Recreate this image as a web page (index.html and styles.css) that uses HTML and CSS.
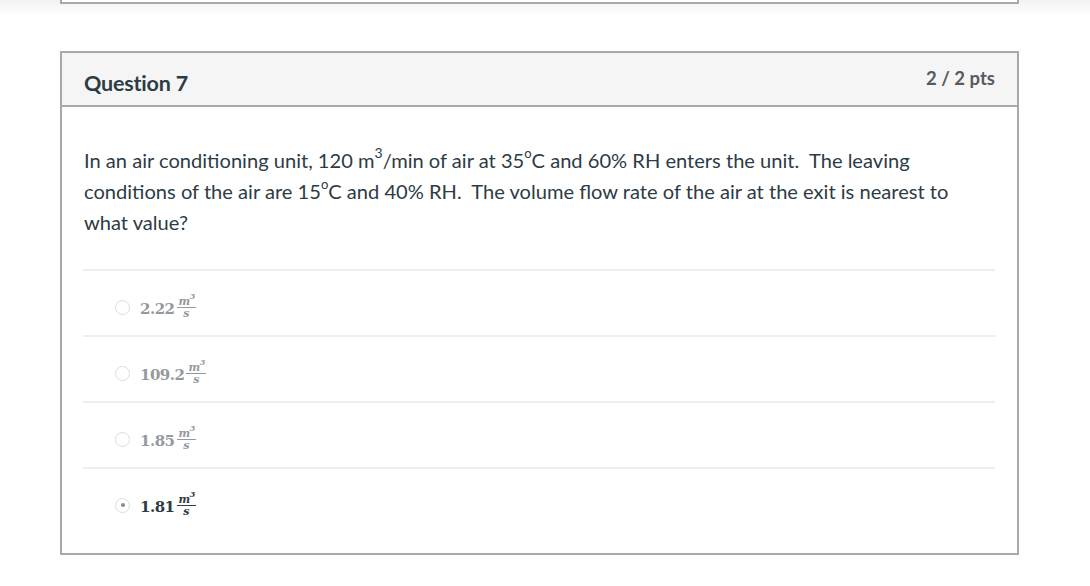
FILE: index.html
```html
<!DOCTYPE html>
<html>
<head>
<meta charset="utf-8">
<link rel="stylesheet" href="styles.css">
</head>
<body>
<div class="page">
  <div class="prev-card"></div>
  <div class="card">
    <div class="card-header">
      <h2 class="q-title">Question 7</h2>
      <span class="q-points">2 / 2 pts</span>
    </div>
    <div class="card-body">
      <p class="q-text">In an air conditioning unit, 120 m<sup>3</sup>/min of air at 35<sup class="deg">o</sup>C and 60% RH enters the unit.&nbsp; The leaving conditions of the air are 15<sup class="deg">o</sup>C and 40% RH.&nbsp; The volume flow rate of the air at the exit is nearest to what value?</p>
      <ul class="answers">
        <li class="answer">
          <span class="radio"></span>
          <span class="math">2.22<span class="frac"><span class="num">m<sup>3</sup></span><span class="den">s</span></span></span>
        </li>
        <li class="answer">
          <span class="radio"></span>
          <span class="math">109.2<span class="frac"><span class="num">m<sup>3</sup></span><span class="den">s</span></span></span>
        </li>
        <li class="answer">
          <span class="radio"></span>
          <span class="math">1.85<span class="frac"><span class="num">m<sup>3</sup></span><span class="den">s</span></span></span>
        </li>
        <li class="answer selected">
          <span class="radio"></span>
          <span class="math">1.81<span class="frac"><span class="num">m<sup>3</sup></span><span class="den">s</span></span></span>
        </li>
      </ul>
    </div>
  </div>
</div>
</body>
</html>
```

FILE: styles.css
```css
html, body {
  margin: 0;
  padding: 0;
}
body {
  background: linear-gradient(#f2f2f2, #ffffff 16px) no-repeat, #ffffff;
  font-family: Lato, "Liberation Sans", sans-serif;
  color: #2d3b45;
  width: 1090px;
  height: 586px;
  overflow: hidden;
}
.page {
  display: flex;
  flex-direction: column;
  padding-left: 60px;
  width: 959px;
}
.prev-card {
  height: 2px;
  border: 2px solid #a9a9a9;
  border-top: none;
  background: #fff;
  box-sizing: content-box;
  width: 955px;
}
.card {
  margin-top: 47px;
  border: 2px solid #a9a9a9;
  background: #fff;
  display: flex;
  flex-direction: column;
}
.card-header {
  background: #f5f5f5;
  border-bottom: 2px solid #a9a9a9;
  height: 52px;
  display: flex;
  justify-content: space-between;
  align-items: flex-start;
  padding: 0 22px;
}
.q-title {
  margin: 0;
  margin-top: 15px;
  font-size: 21.5px;
  font-weight: 700;
  line-height: 30px;
  color: #2d3b45;
  letter-spacing: -0.2px;
}
.q-points {
  margin-top: 12px;
  font-size: 18.5px;
  font-weight: 700;
  line-height: 26px;
  color: #555b61;
}
.card-body {
  padding: 38px 22px 20px 21px;
}
.q-text {
  margin: 0 30px 0 1px;
  font-size: 20.1px;
  line-height: 31px;
  color: #2d3b45;
}
.q-text sup {
  font-size: 14px;
  line-height: 0;
  position: relative;
  top: -2px;
}
.q-text sup.deg {
  font-size: 13px;
}
.answers {
  list-style: none;
  margin: 31px 0 0 0;
  padding: 0;
  border-top: 2px solid #eeeeee;
}
.answer {
  height: 56px;
  padding-top: 8px;
  display: flex;
  align-items: center;
  padding-left: 32px;
  border-bottom: 2px solid #eeeeee;
  color: #95999d;
}
.answer:last-child {
  border-bottom: none;
}
.answer.selected {
  color: #2d3b45;
}
.radio {
  width: 15px;
  height: 15px;
  border: 1px solid #dcdcdc;
  border-radius: 50%;
  box-sizing: border-box;
  margin-right: 10px;
  display: flex;
  align-items: center;
  justify-content: center;
  background: #fff;
}
.selected .radio::after {
  content: "";
  width: 4px;
  height: 4px;
  border-radius: 50%;
  background: #8a8a8a;
}
.math {
  font-family: "DejaVu Serif", "Liberation Serif", serif;
  font-weight: 700;
  font-size: 15px;
  display: inline-flex;
  align-items: center;
  letter-spacing: -0.5px;
  margin-top: 3px;
}
.frac {
  display: inline-flex;
  flex-direction: column;
  align-items: center;
  margin-left: 2px;
  font-style: italic;
  font-size: 11px;
  line-height: 10px;
  margin-top: -2px;
}
.num {
  border-bottom: 1.5px solid currentColor;
  padding: 0 1px 0 2px;
}
.num sup {
  font-size: 8px;
  line-height: 0;
  position: relative;
  top: -1px;
}
.den {
  padding-top: 1px;
}
```
